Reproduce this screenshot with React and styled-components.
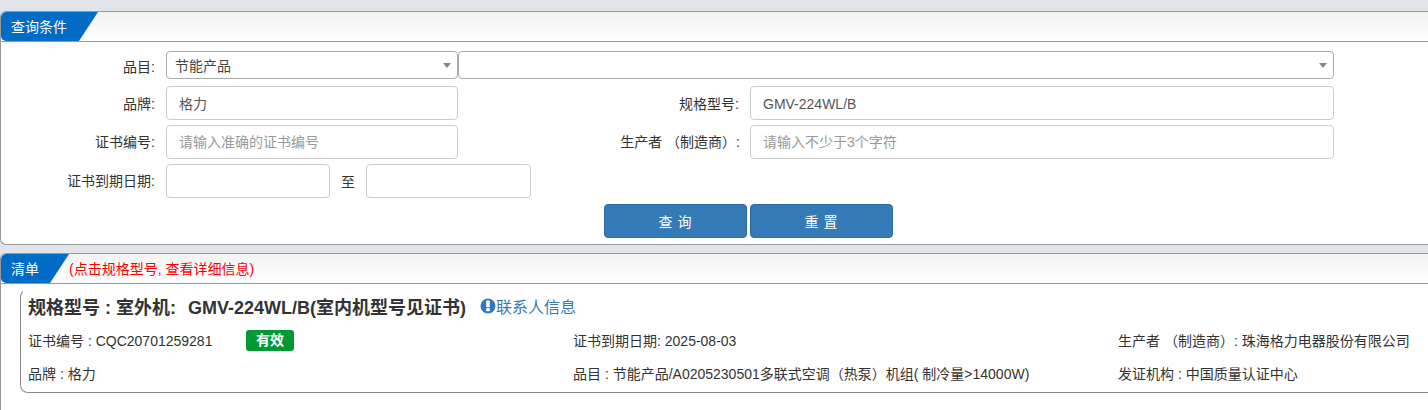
import React from "react";
import styled, { createGlobalStyle } from "styled-components";

const GlobalStyle = createGlobalStyle`
  html, body {
    margin: 0;
    padding: 0;
    background: #e1e5e9;
    overflow: hidden;
  }
  body {
    font-family: "Liberation Sans", "Noto Sans CJK SC", sans-serif;
    font-size: 14px;
    color: #333;
  }
`;

const Page = styled.div`
  width: 1428px;
  height: 410px;
  padding-top: 11px;
  box-sizing: border-box;
  overflow: hidden;
`;

const Panel = styled.section`
  background: #fff;
  border: 1px solid #999;
  border-right: 0;
  border-radius: 6px 0 0 6px;
  margin-bottom: 8px;
  overflow: hidden;
  height: ${(p) => p.$height}px;
  box-sizing: border-box;
  ${(p) => p.$open && "border-bottom: 0; border-radius: 6px 0 0 0;"}
`;

const PanelHead = styled.header`
  height: 29px;
  display: flex;
  align-items: center;
  background: linear-gradient(#f2f2f2, #fff);
  border-bottom: 1px solid #999;
`;

const HeadTab = styled.div`
  width: ${(p) => p.$width}px;
  height: 29px;
  padding-left: 10px;
  box-sizing: border-box;
  background: #006cc6;
  color: #fff;
  line-height: 30px;
  clip-path: polygon(0 0, 100% 0, calc(100% - 19px) 100%, 0 100%);
  border-radius: 5px 0 0 5px;
`;

const HeadHint = styled.span`
  color: #f00;
  line-height: 20px;
  padding-top: 1px;
`;

const Form = styled.div`
  padding-top: 9px;
`;

const FormRow = styled.div`
  display: flex;
  align-items: center;
  margin-bottom: ${(p) => p.$gap ?? 5}px;
`;

const Label = styled.label`
  width: ${(p) => p.$width}px;
  flex: none;
  text-align: right;
  padding-right: ${(p) => p.$pad ?? 11}px;
  box-sizing: border-box;
  color: #333;
  position: relative;
  top: ${(p) => p.$top ?? -1}px;
`;

const SelectBox = styled.div`
  width: ${(p) => p.$width}px;
  height: 28px;
  flex: none;
  box-sizing: border-box;
  border: 1px solid #aaa;
  border-radius: 4px;
  padding-left: 8px;
  display: flex;
  align-items: center;
  justify-content: space-between;
  color: #444;
  background: #fff;
`;

const SelectText = styled.span`
  padding-bottom: 1px;
`;

const Caret = styled.i`
  width: 0;
  height: 0;
  margin-right: 6px;
  border-left: 4px solid transparent;
  border-right: 4px solid transparent;
  border-top: 5px solid #888;
`;

const Input = styled.div`
  width: ${(p) => p.$width}px;
  height: 34px;
  flex: none;
  box-sizing: border-box;
  border: 1px solid #ccc;
  border-radius: 4px;
  padding: 0 12px;
  line-height: ${(p) => (p.$placeholder ? 32 : 34)}px;
  background: #fff;
  color: ${(p) => (p.$placeholder ? "#999" : "#555")};
`;

const To = styled.span`
  width: 36px;
  text-align: center;
  flex: none;
`;

const Buttons = styled.div`
  display: flex;
  justify-content: center;
  gap: 3px;
  width: 1495px;
  margin-top: 6px;
`;

const Button = styled.button`
  width: 143px;
  height: 34px;
  border: 1px solid #2e6da4;
  border-radius: 4px;
  background: #337ab7;
  color: #fff;
  font: inherit;
  letter-spacing: 5px;
  padding: 0 0 0 4px;
`;

const Card = styled.article`
  width: 1660px;
  margin: 5px 0 0 19px;
  height: 104px;
  box-sizing: border-box;
  border: 1px solid #888;
  border-top-color: transparent;
  border-radius: 8px;
  padding: 4px 0 0 7px;
`;

const TitleRow = styled.div`
  display: flex;
  align-items: center;
  height: 24px;
  margin-bottom: 13px;
`;

const Title = styled.h3`
  margin: 0;
  font-size: 18px;
  font-weight: 700;
  color: #333;
`;

const TitleKey = styled.span`
  margin-right: 2px;
`;

const ContactLink = styled.a`
  display: inline-flex;
  align-items: center;
  margin-left: 14px;
  font-size: 16px;
  color: #337ab7;
`;

const InfoGrid = styled.div`
  display: grid;
  grid-template-columns: repeat(3, 545px);
  row-gap: 13px;
`;

const Cell = styled.div`
  height: 20px;
  line-height: 20px;
  display: flex;
  align-items: center;
  white-space: nowrap;
`;

const CertNumber = styled.span`
  width: 218px;
  flex: none;
`;

const Badge = styled.span`
  width: 48px;
  height: 21px;
  line-height: 21px;
  margin-top: -1px;
  border-radius: 3px;
  background: #009933;
  color: #fff;
  font-weight: 700;
  text-align: center;
`;

const InfoIcon = () => (
  <svg width="16" height="16" viewBox="0 0 16 16" aria-hidden="true">
    <circle cx="8" cy="8" r="7.5" fill="#337ab7" />
    <rect x="6.2" y="2.6" width="3.6" height="6.6" rx="1" fill="#fff" />
    <rect x="6.2" y="10.2" width="3.6" height="3" fill="#fff" />
  </svg>
);

export default function App() {
  return (
    <Page>
      <GlobalStyle />
      <Panel $height={234}>
        <PanelHead>
          <HeadTab $width={97}>查询条件</HeadTab>
        </PanelHead>
        <Form>
          <FormRow $gap={7}>
            <Label $width={165} $top={1}>品目:</Label>
            <SelectBox $width={292}>
              <SelectText>节能产品</SelectText>
              <Caret />
            </SelectBox>
            <SelectBox $width={876}>
              <span />
              <Caret />
            </SelectBox>
          </FormRow>
          <FormRow>
            <Label $width={165} $top={0}>品牌:</Label>
            <Input $width={292}>格力</Input>
            <Label $width={292} $top={0}>规格型号:</Label>
            <Input $width={584}>GMV-224WL/B</Input>
          </FormRow>
          <FormRow>
            <Label $width={165}>证书编号:</Label>
            <Input $width={292} $placeholder>请输入准确的证书编号</Input>
            <Label $width={292} $pad={10}>生产者 （制造商）:</Label>
            <Input $width={584} $placeholder>请输入不少于3个字符</Input>
          </FormRow>
          <FormRow $gap={0}>
            <Label $width={165}>证书到期日期:</Label>
            <Input $width={164} />
            <To>至</To>
            <Input $width={165} />
          </FormRow>
          <Buttons>
            <Button>查询</Button>
            <Button>重置</Button>
          </Buttons>
        </Form>
      </Panel>
      <Panel $height={157} $open>
        <PanelHead>
          <HeadTab $width={68}>清单</HeadTab>
          <HeadHint>(点击规格型号, 查看详细信息)</HeadHint>
        </PanelHead>
        <Card>
          <TitleRow>
            <Title>
              <TitleKey>规格型号 : 室外机:&nbsp; </TitleKey>
              GMV-224WL/B(室内机型号见证书)
            </Title>
            <ContactLink>
              <InfoIcon />
              联系人信息
            </ContactLink>
          </TitleRow>
          <InfoGrid>
            <Cell>
              <CertNumber>证书编号 : CQC20701259281</CertNumber>
              <Badge>有效</Badge>
            </Cell>
            <Cell>证书到期日期: 2025-08-03</Cell>
            <Cell>生产者 （制造商）: 珠海格力电器股份有限公司</Cell>
            <Cell>品牌 : 格力</Cell>
            <Cell>品目 : 节能产品/A0205230501多联式空调（热泵）机组( 制冷量&gt;14000W)</Cell>
            <Cell>发证机构 : 中国质量认证中心</Cell>
          </InfoGrid>
        </Card>
      </Panel>
    </Page>
  );
}
